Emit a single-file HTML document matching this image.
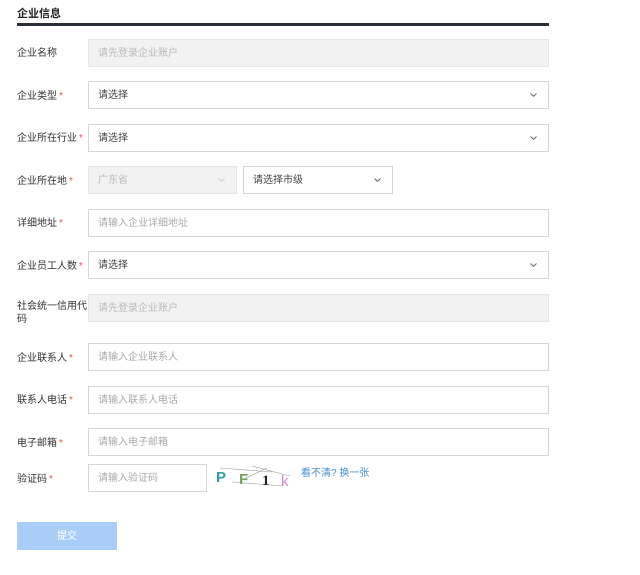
<!DOCTYPE html>
<html><head><meta charset="utf-8"><style>
*{margin:0;padding:0;box-sizing:border-box}
body{width:640px;height:575px;background:#fff;font-family:"Liberation Sans","Noto Sans CJK SC",sans-serif;font-size:10px;color:#333;position:relative;overflow:hidden}
.a{position:absolute}
.h{left:17px;top:5px;font-size:11px;font-weight:bold;color:#222}
.line{left:17px;top:23px;width:532px;height:3px;background:#2b2f36}
.lb{left:17px;font-size:10px;color:#333;line-height:13px;margin-top:1px}
.lb i{color:#d9534f;font-style:normal;margin-left:2px}
.in{border:1px solid #d6d6d6;background:#fff;height:28px;display:flex;align-items:center;padding-left:9px;padding-bottom:3px;color:#444}
.ph{color:#aaa}
.dis{background:#f2f2f2;border-color:#e6e6e6;color:#bbb}
.ch{position:absolute;right:11px;top:11px}
</style></head><body>
<svg width="0" height="0" style="position:absolute"><defs><symbol id="c" viewBox="0 0 7 4"><path d="M0.5 0.5 L3.5 3.3 L6.5 0.5" stroke="currentColor" fill="none" stroke-width="1"/></symbol></defs></svg>
<div class="a h">企业信息</div>
<div class="a line"></div>

<div class="a lb" style="top:46px">企业名称</div>
<div class="a in dis" style="left:88px;top:39px;width:461px">请先登录企业账户</div>

<div class="a lb" style="top:89px">企业类型<i>*</i></div>
<div class="a in" style="left:88px;top:81px;width:461px">请选择<svg class="ch" width="7" height="4" style="color:#666"><use href="#c"/></svg></div>

<div class="a lb" style="top:131px">企业所在行业<i>*</i></div>
<div class="a in" style="left:88px;top:124px;width:461px">请选择<svg class="ch" width="7" height="4" style="color:#666"><use href="#c"/></svg></div>

<div class="a lb" style="top:174px">企业所在地<i>*</i></div>
<div class="a in dis" style="left:88px;top:166px;width:149px">广东省<svg class="ch" width="7" height="4" style="color:#ccc"><use href="#c"/></svg></div>
<div class="a in" style="left:243px;top:166px;width:150px">请选择市级<svg class="ch" width="7" height="4" style="color:#666"><use href="#c"/></svg></div>

<div class="a lb" style="top:216px">详细地址<i>*</i></div>
<div class="a in ph" style="left:88px;top:209px;width:461px">请输入企业详细地址</div>

<div class="a lb" style="top:259px">企业员工人数<i>*</i></div>
<div class="a in" style="left:88px;top:251px;width:461px">请选择<svg class="ch" width="7" height="4" style="color:#666"><use href="#c"/></svg></div>

<div class="a lb" style="top:299px;width:70px">社会统一信用代码</div>
<div class="a in dis" style="left:88px;top:294px;width:461px">请先登录企业账户</div>

<div class="a lb" style="top:351px">企业联系人<i>*</i></div>
<div class="a in ph" style="left:88px;top:343px;width:461px">请输入企业联系人</div>

<div class="a lb" style="top:393px">联系人电话<i>*</i></div>
<div class="a in ph" style="left:88px;top:386px;width:461px">请输入联系人电话</div>

<div class="a lb" style="top:436px">电子邮箱<i>*</i></div>
<div class="a in ph" style="left:88px;top:428px;width:461px">请输入电子邮箱</div>

<div class="a lb" style="top:472px">验证码<i>*</i></div>
<div class="a in ph" style="left:88px;top:464px;width:119px">请输入验证码</div>
<svg class="a" style="left:212px;top:462px" width="86" height="32">
<path d="M8 6 L60 10 M20 20 L70 24 M30 18 L55 6 M40 4 L78 14" stroke="#999" stroke-width="0.6" fill="none"/>
<text x="4" y="20" font-size="15" font-weight="bold" fill="#3a9ba8" font-family="Liberation Sans">P</text>
<text x="27" y="22" font-size="15" font-weight="bold" fill="#7aa060" font-family="Liberation Sans">F</text>
<text x="50" y="23" font-size="15" font-weight="bold" fill="#222" font-family="Liberation Serif">1</text>
<text x="69" y="24" font-size="15" fill="#d08cd0" font-family="Liberation Sans">k</text>
</svg>
<div class="a" style="left:301px;top:464px;color:#4a8fd0;font-size:10px">看不清? 换一张</div>

<div class="a" style="left:17px;top:522px;width:100px;height:28px;background:#a9cdf6;color:#fff;display:flex;align-items:center;justify-content:center;padding-bottom:3px">提交</div>
</body></html>
